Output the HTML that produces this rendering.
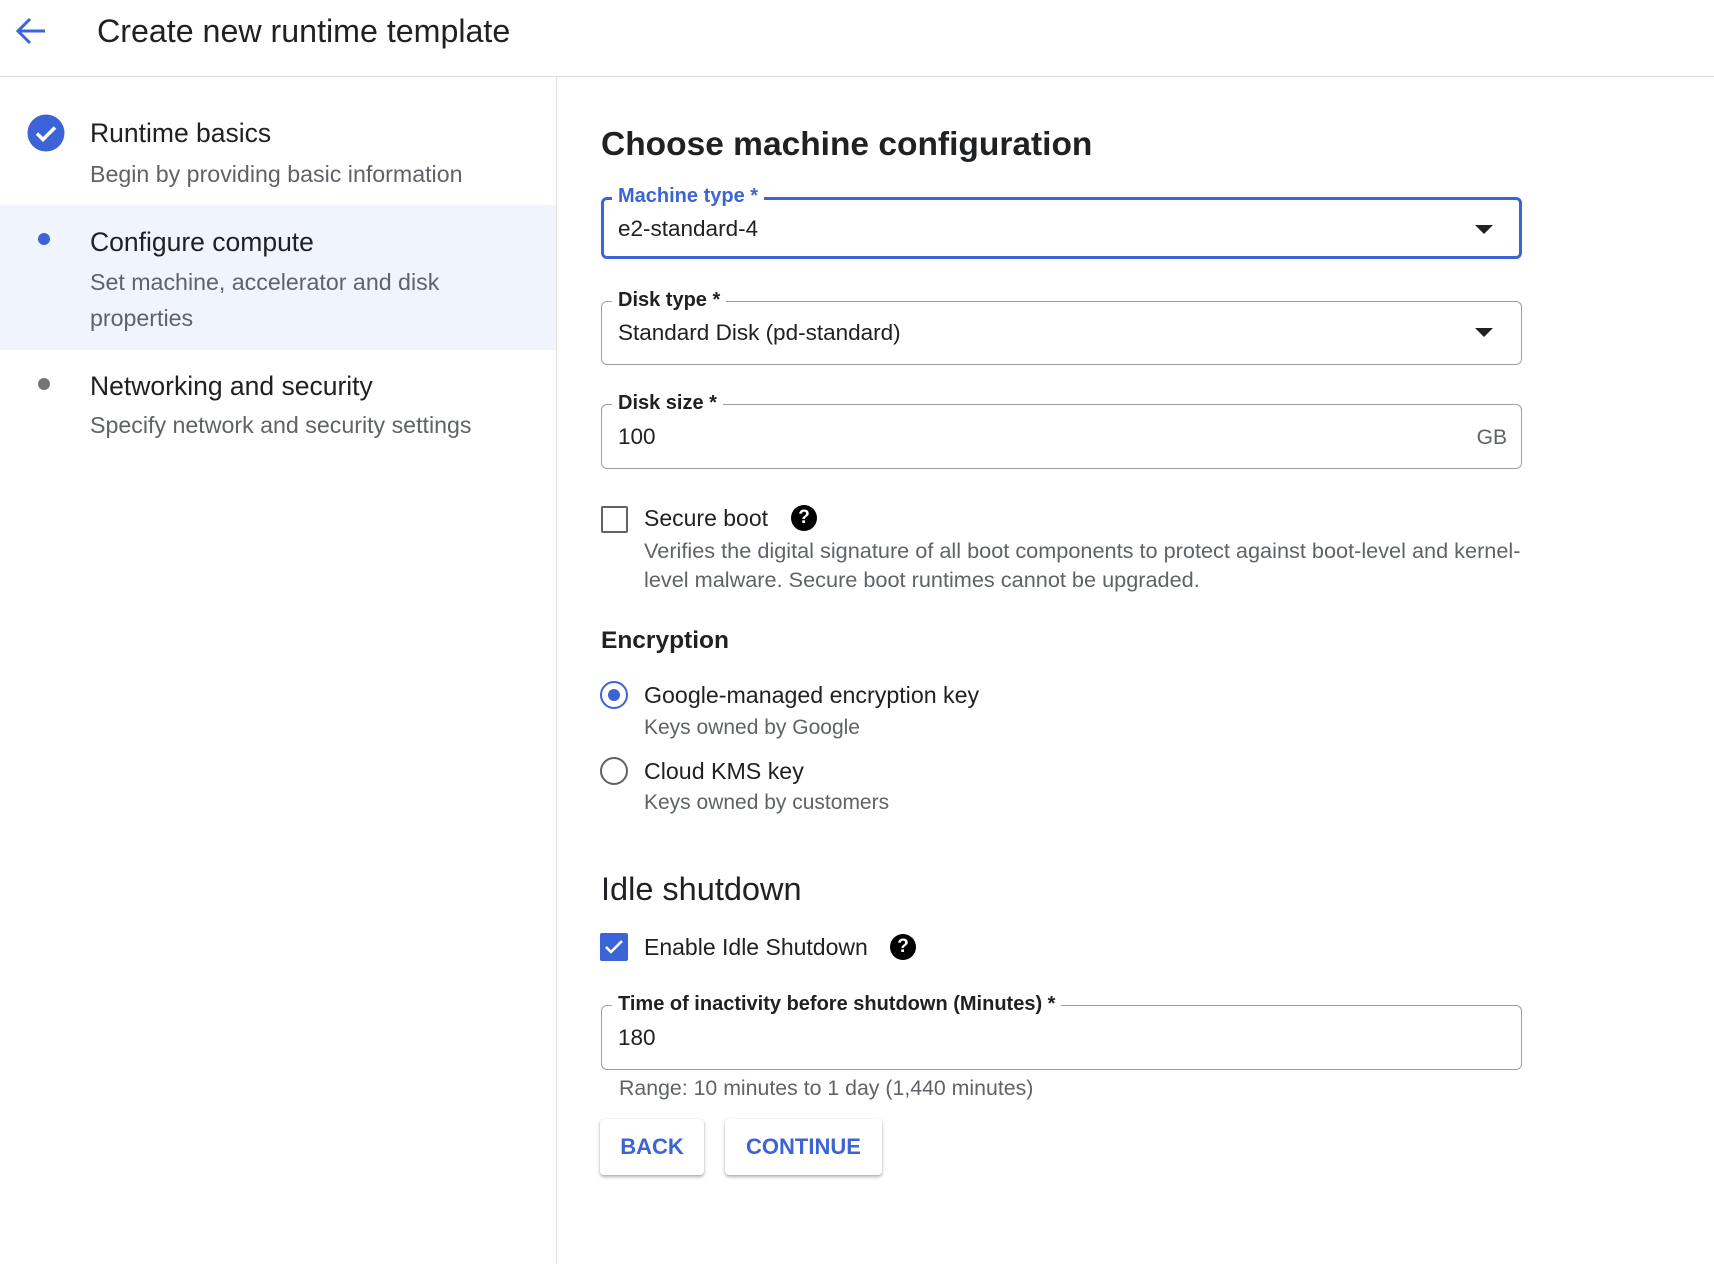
<!DOCTYPE html>
<html><head><meta charset="utf-8"><style>
body{margin:0;width:1714px;height:1264px;background:#fff;font-family:"Liberation Sans",Arial,sans-serif;color:#202124;position:relative;overflow:hidden}
.a{position:absolute;white-space:nowrap;line-height:1}
.hdr{position:absolute;left:0;top:0;width:1714px;height:76px;border-bottom:1px solid #dadce0}
.side{position:absolute;left:0;top:77px;width:556px;height:1187px;border-right:1px solid #e0e0e0}
.t{font-size:26.5px;color:#202124}
.s{font-size:23.2px;color:#5f6368}
.fld{position:absolute;left:601px;width:921px;border:1px solid #9aa0a6;border-radius:6px;box-sizing:border-box}
.lbl{position:absolute;background:#fff;padding:0 6px;font-size:20px;font-weight:bold;line-height:1;color:#202124}
.val{position:absolute;left:16px;font-size:22.5px;line-height:1}
.tri{position:absolute;right:28px;width:0;height:0;border-left:9px solid transparent;border-right:9px solid transparent;border-top:9px solid #202124}
.q{position:absolute;width:26px;height:26px;border-radius:50%;background:#000;color:#fff;font-size:19px;font-weight:bold;text-align:center;line-height:26px}
.btn{position:absolute;top:1119px;height:56px;background:#fff;border-radius:4px;box-shadow:0 2px 3px rgba(0,0,0,.3),0 0 1px rgba(0,0,0,.15);color:#3c64d6;font-size:22px;font-weight:bold;text-align:center;line-height:56px}
.d{font-size:21.7px;color:#5f6368}
</style></head><body>
<div class="hdr"></div>
<svg class="a" style="left:14px;top:16px" width="34" height="30" viewBox="0 0 34 30"><path d="M31 15H4M16 3L4 15l12 12" fill="none" stroke="#3c64d6" stroke-width="3"/></svg>
<div class="a" style="left:97px;top:15px;font-size:32.2px">Create new runtime template</div>

<div class="side"></div>
<div class="a" style="left:0;top:205px;width:556px;height:145px;background:#eff4fd"></div>
<svg class="a" style="left:27px;top:114px" width="38" height="38" viewBox="0 0 38 38"><circle cx="19" cy="19" r="18.5" fill="#3c64d6"/><path d="M10 19.5l6 6 12-12" fill="none" stroke="#fff" stroke-width="3.5"/></svg>
<div class="a t" style="left:90px;top:120px">Runtime basics</div>
<div class="a s" style="left:90px;top:163px">Begin by providing basic information</div>
<div class="a" style="left:38px;top:233px;width:12px;height:12px;border-radius:50%;background:#3c64d6"></div>
<div class="a t" style="left:90px;top:229px">Configure compute</div>
<div class="a s" style="left:90px;top:271px">Set machine, accelerator and disk</div>
<div class="a s" style="left:90px;top:307px">properties</div>
<div class="a" style="left:38px;top:378px;width:12px;height:12px;border-radius:50%;background:#757575"></div>
<div class="a t" style="left:90px;top:373px">Networking and security</div>
<div class="a s" style="left:90px;top:414px">Specify network and security settings</div>

<div class="a" style="left:601px;top:128px;font-size:33.5px;font-weight:bold">Choose machine configuration</div>

<div class="fld" style="top:197px;height:62px;border:3px solid #3c64d6">
 <div class="lbl" style="left:8px;top:-14px;color:#3c64d6">Machine type *</div>
 <div class="val" style="left:14px;top:18px">e2-standard-4</div>
 <div class="tri" style="top:25px;right:26px"></div>
</div>
<div class="fld" style="top:301px;height:64px">
 <div class="lbl" style="left:10px;top:-12px">Disk type *</div>
 <div class="val" style="top:20px">Standard Disk (pd-standard)</div>
 <div class="tri" style="top:26px"></div>
</div>
<div class="fld" style="top:404px;height:65px">
 <div class="lbl" style="left:10px;top:-12px">Disk size *</div>
 <div class="val" style="top:21px">100</div>
 <div class="a" style="right:14px;top:22px;font-size:21px;color:#5f6368">GB</div>
</div>

<div class="a" style="left:601px;top:506px;width:23px;height:23px;border:2px solid #5f6368;border-radius:2px"></div>
<div class="a" style="left:644px;top:507px;font-size:23px">Secure boot</div>
<div class="q" style="left:791px;top:505px">?</div>
<div class="a d" style="left:644px;top:540px">Verifies the digital signature of all boot components to protect against boot-level and kernel-</div>
<div class="a d" style="left:644px;top:569px">level malware. Secure boot runtimes cannot be upgraded.</div>

<div class="a" style="left:601px;top:629px;font-size:24.5px;font-weight:bold">Encryption</div>
<div class="a" style="left:600px;top:681px;width:28px;height:28px;border:2.5px solid #3c64d6;border-radius:50%;box-sizing:border-box"></div>
<div class="a" style="left:608px;top:689px;width:12px;height:12px;border-radius:50%;background:#3c64d6"></div>
<div class="a" style="left:644px;top:684px;font-size:23.2px">Google-managed encryption key</div>
<div class="a" style="left:644px;top:717px;font-size:21px;color:#5f6368">Keys owned by Google</div>
<div class="a" style="left:600px;top:757px;width:28px;height:28px;border:2.5px solid #5f6368;border-radius:50%;box-sizing:border-box"></div>
<div class="a" style="left:644px;top:760px;font-size:23.2px">Cloud KMS key</div>
<div class="a" style="left:644px;top:792px;font-size:21px;color:#5f6368">Keys owned by customers</div>

<div class="a" style="left:601px;top:873px;font-size:32.5px">Idle shutdown</div>
<svg class="a" style="left:600px;top:933px" width="28" height="28" viewBox="0 0 28 28"><rect width="28" height="28" rx="2" fill="#3c64d6"/><path d="M6 14l5 5 11-11" fill="none" stroke="#fff" stroke-width="2.5"/></svg>
<div class="a" style="left:644px;top:936px;font-size:23px">Enable Idle Shutdown</div>
<div class="q" style="left:890px;top:934px">?</div>

<div class="fld" style="top:1005px;height:65px">
 <div class="lbl" style="left:10px;top:-12px">Time of inactivity before shutdown (Minutes) *</div>
 <div class="val" style="top:21px">180</div>
</div>
<div class="a" style="left:619px;top:1078px;font-size:21.3px;color:#5f6368">Range: 10 minutes to 1 day (1,440 minutes)</div>

<div class="btn" style="left:600px;width:104px">BACK</div>
<div class="btn" style="left:725px;width:157px">CONTINUE</div>
</body></html>
